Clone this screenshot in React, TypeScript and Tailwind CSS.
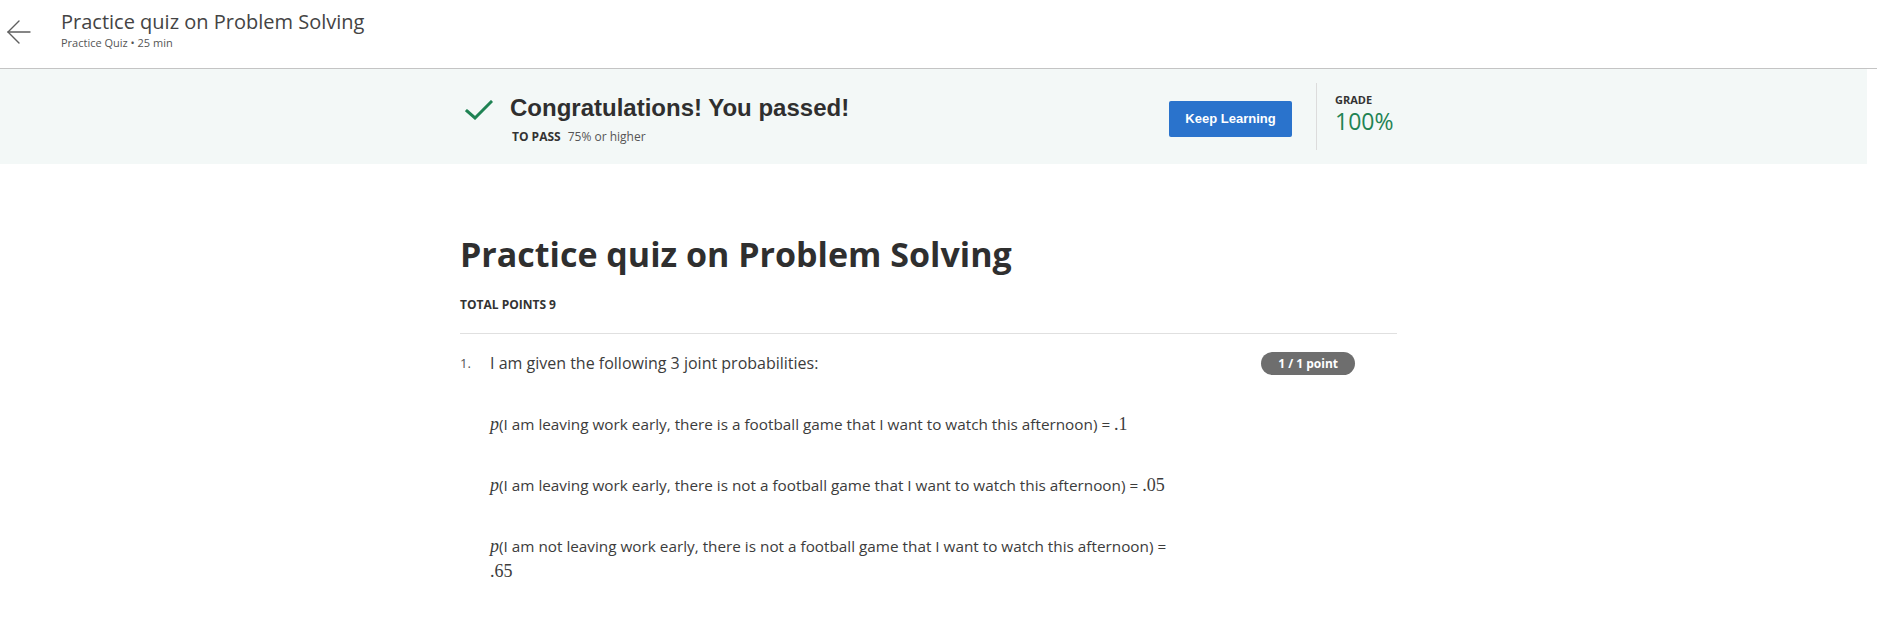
import React from "react";

function BackArrow() {
  return (
    <svg width="26" height="26" viewBox="0 0 26 26" fill="none" stroke="#5f5f5f" strokeWidth="1.4" strokeLinecap="round">
      <line x1="24" y1="13" x2="2" y2="13" />
      <polyline points="13,2 2,13 13,24" />
    </svg>
  );
}

function Check() {
  return (
    <svg width="28" height="20" viewBox="0 0 28 20" fill="none" stroke="#1f8354" strokeWidth="3" strokeLinecap="square">
      <polyline points="2,11 10,18 26,2" />
    </svg>
  );
}

function Math({ children }: { children: React.ReactNode }) {
  return <span className="font-['Liberation_Serif'] text-[18px]">{children}</span>;
}

export default function App() {
  const lines: { pre: string; val: string }[] = [
    { pre: "I am leaving work early, there is a football game that I want to watch this afternoon) = ", val: ".1" },
    { pre: "I am leaving work early, there is not a football game that I want to watch this afternoon) = ", val: ".05" },
    { pre: "I am not leaving work early, there is not a football game that I want to watch this afternoon) = ", val: ".65" },
  ];

  return (
    <div className="w-[1877px] h-[624px] overflow-hidden bg-white font-['Open_Sans'] text-[#333]">
      {/* top header */}
      <header className="h-[69px] border-b border-[#c4c4c4] flex items-start">
        <div className="ml-[6px] mt-[19px]">
          <BackArrow />
        </div>
        <div className="ml-[29px] mt-[8px]">
          <h1 className="text-[20px] leading-[28px] text-[#444]">Practice quiz on Problem Solving</h1>
          <p className="text-[11px] leading-[14px] text-[#555]">Practice Quiz • 25 min</p>
        </div>
      </header>

      {/* result banner */}
      <section className="w-[1867px] h-[95px] bg-[#f3f8f7]">
        <div className="ml-[460px] w-[937px] flex items-start">
          <div className="ml-[5px] mt-[31px]">
            <Check />
          </div>
          <div className="ml-[17px] mt-[25px]">
            <h2 className="font-['Liberation_Sans'] font-bold text-[24px] leading-[28px] text-[#2f2f2f]">
              Congratulations! You passed!
            </h2>
            <p className="mt-[7px] text-[12px] leading-[16px] ml-[2px]">
              <span className="font-bold">TO PASS</span>
              <span className="ml-[7px] text-[#555]">75% or higher</span>
            </p>
          </div>
          <button className="ml-auto mt-[32px] w-[123px] h-[36px] rounded-[2px] bg-[#2a73cc] text-white font-['Liberation_Sans'] font-bold text-[13px]">
            Keep Learning
          </button>
          <div className="ml-[24px] mt-[14px] w-px h-[67px] bg-[#dcdcdc]" />
          <div className="ml-[18px] mt-[24px] w-[62px]">
            <p className="text-[11px] leading-[14px] font-bold">GRADE</p>
            <p className="text-[23px] leading-[28px] text-[#1f8354]">100%</p>
          </div>
        </div>
      </section>

      {/* quiz body */}
      <main className="ml-[460px] w-[937px]">
        <h1 className="mt-[70px] text-[34px] leading-[40px] font-bold text-[#2f2f2f]">
          Practice quiz on Problem Solving
        </h1>
        <p className="mt-[23px] pb-[20px] border-b border-[#e0e0e0] text-[12px] leading-[16px] font-bold">
          TOTAL POINTS 9
        </p>

        <div className="flex items-start pt-[17px] pr-[42px]">
          <span className="w-[30px] text-[13px] leading-[25px] text-[#555]">1.</span>
          <div className="w-[690px] text-[15.3px] leading-[25px] text-[#3c3c3c]">
            <p className="text-[16px]">I am given the following 3 joint probabilities:</p>
            {lines.map((l, i) => (
              <p key={i} className="mt-[36px]">
                <Math>
                  <i>p</i>
                </Math>
                ({l.pre}
                <Math>{l.val}</Math>
              </p>
            ))}
          </div>
          <span className="ml-auto mt-[1px] h-[23px] px-[17px] rounded-full bg-[#6e6e6e] text-white text-[12px] font-bold leading-[23px]">
            1 / 1 point
          </span>
        </div>
      </main>
    </div>
  );
}
